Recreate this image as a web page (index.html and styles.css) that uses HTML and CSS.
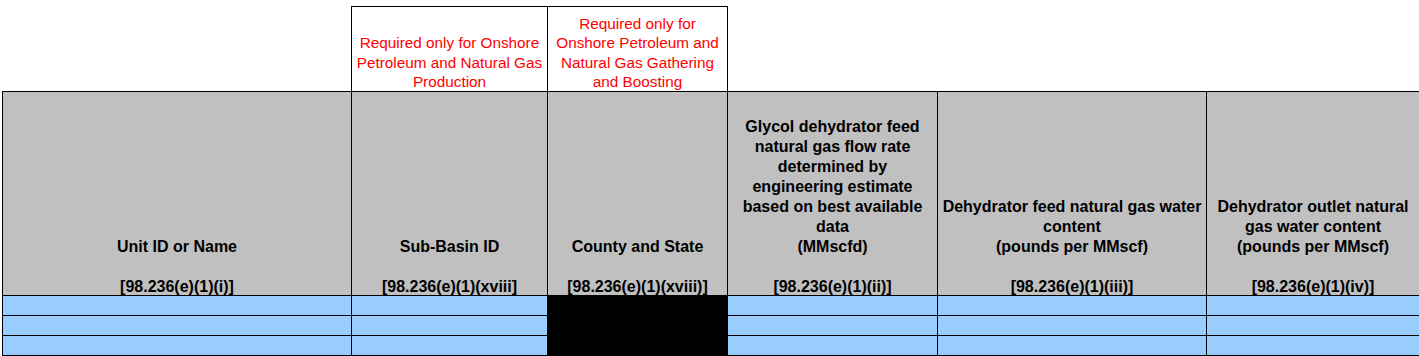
FILE: index.html
```html
<!DOCTYPE html>
<html>
<head>
<meta charset="utf-8">
<link rel="stylesheet" href="styles.css">
</head>
<body>
<table class="sheet">
  <colgroup>
    <col class="w-unit">
    <col class="w-basin">
    <col class="w-county">
    <col class="w-glycol">
    <col class="w-feed">
    <col class="w-outlet">
  </colgroup>
  <tr class="note-row">
    <td class="blank"></td>
    <td class="note"><div class="note-text">Required only for Onshore Petroleum and Natural Gas Production</div></td>
    <td class="note"><div class="note-text">Required only for Onshore Petroleum and Natural Gas Gathering and Boosting</div></td>
    <td class="blank"></td>
    <td class="blank"></td>
    <td class="blank"></td>
  </tr>
  <tr class="head-row">
    <th><div class="head-text">Unit ID or Name<br><br>[98.236(e)(1)(i)]</div></th>
    <th><div class="head-text">Sub-Basin ID<br><br>[98.236(e)(1)(xviii]</div></th>
    <th><div class="head-text">County and State<br><br>[98.236(e)(1)(xviii)]</div></th>
    <th><div class="head-text">Glycol dehydrator feed natural gas flow rate determined by engineering estimate based on best available data<br>(MMscfd)<br><br>[98.236(e)(1)(ii)]</div></th>
    <th><div class="head-text">Dehydrator feed natural gas water content<br>(pounds per MMscf)<br><br>[98.236(e)(1)(iii)]</div></th>
    <th><div class="head-text">Dehydrator outlet natural gas water content<br>(pounds per MMscf)<br><br>[98.236(e)(1)(iv)]</div></th>
  </tr>
  <tr class="data-row">
    <td class="input"></td><td class="input"></td><td class="na"></td><td class="input"></td><td class="input"></td><td class="input"></td>
  </tr>
  <tr class="data-row">
    <td class="input"></td><td class="input"></td><td class="na"></td><td class="input"></td><td class="input"></td><td class="input"></td>
  </tr>
  <tr class="data-row">
    <td class="input"></td><td class="input"></td><td class="na"></td><td class="input"></td><td class="input"></td><td class="input"></td>
  </tr>
</table>
</body>
</html>
```

FILE: styles.css
```css
html, body {
  margin: 0;
  padding: 0;
  background: #ffffff;
}

body {
  padding: 6px 0 0 2px;
  font-family: "Liberation Sans", Arial, sans-serif;
}

.sheet {
  border-collapse: collapse;
  table-layout: fixed;
  width: 1417px;
}

.w-unit { width: 349px; }
.w-basin { width: 196px; }
.w-county { width: 180px; }
.w-glycol { width: 210px; }
.w-feed { width: 269px; }
.w-outlet { width: 213px; }

.sheet td, .sheet th {
  padding: 0;
  vertical-align: bottom;
  text-align: center;
}

.note-row { height: 85px; }
.head-row { height: 204px; }
.data-row { height: 20px; }

.blank {
  border: none;
}

.note {
  border: 1px solid #000;
  padding: 0 3px;
  color: #ff0000;
  font-size: 15.3px;
  line-height: 19.6px;
  overflow: hidden;
}

.note-text {
  margin-bottom: -1px;
}

.head-row th {
  border: 1px solid #000;
  background: #c0c0c0;
  padding: 0 4px;
  color: #000;
  font-size: 16px;
  font-weight: bold;
  line-height: 20px;
}

.head-text {
  margin-bottom: -2px;
}

.input {
  border: 1px solid #000;
  background: #99ccff;
}

.na {
  border: 1px solid #000;
  background: #000;
}
```
